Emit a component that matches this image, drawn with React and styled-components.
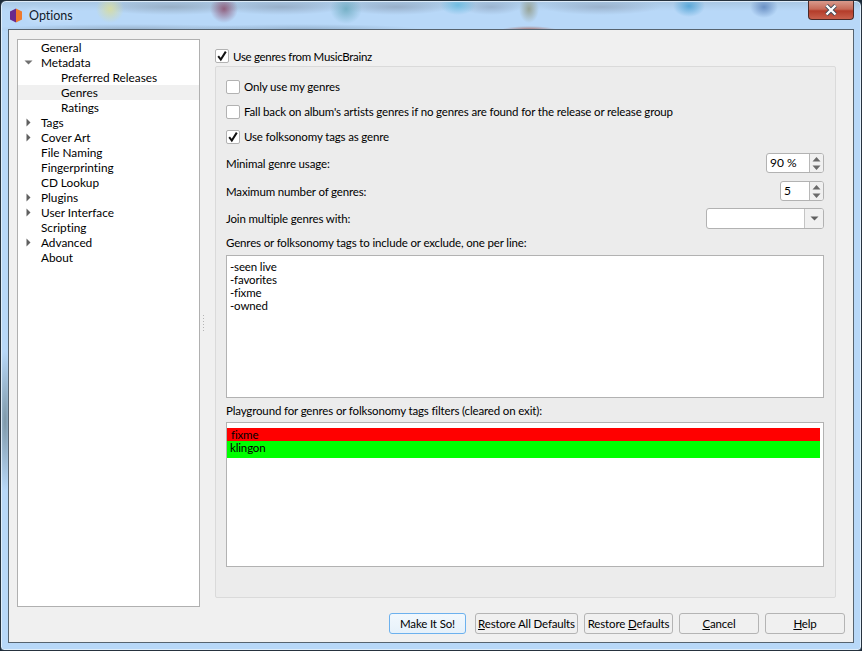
import React from 'react';
import styled, { createGlobalStyle } from 'styled-components';

const GlobalStyle = createGlobalStyle`
  html, body {
    margin: 0;
    padding: 0;
    background: #1c2a38;
  }
  * {
    box-sizing: border-box;
  }
`;

// Aero glass window frame with blurred desktop behind it
const Frame = styled.div`
  width: 862px;
  height: 651px;
  padding: 28px 7px 7px 7px;
  display: flex;
  flex-direction: column;
  position: relative;
  border: 1px solid #26323e;
  border-radius: 6px 6px 4px 4px;
  box-shadow: inset 0 0 0 1px #e4f0fae0;
  font-family: Lato, 'Liberation Sans', sans-serif;
  font-size: 11.5px;
  font-variant-ligatures: none;
  color: #000;
  background:
    radial-gradient(ellipse 14px 14px at 109px 8px, #d4dca8, #d4dca800),
    radial-gradient(ellipse 14px 14px at 223px 8px, #8a4a68d0, #8a4a6800),
    radial-gradient(ellipse 16px 15px at 345px 8px, #68a8bcd0, #68a8bc00),
    radial-gradient(ellipse 18px 10px at 457px 4px, #70bce0, #70bce000),
    radial-gradient(ellipse 10px 14px at 528px 8px, #98a498, #98a49800),
    radial-gradient(ellipse 16px 11px at 688px 5px, #5aa8d8, #5aa8d800),
    radial-gradient(ellipse 14px 11px at 763px 6px, #6a90c4, #6a90c400),
    radial-gradient(ellipse 75px 8px at 170px 6px, #8ca0b4b0, #8ca0b400),
    radial-gradient(ellipse 65px 8px at 280px 6px, #8ca0b8b0, #8ca0b800),
    radial-gradient(ellipse 55px 8px at 395px 6px, #8ca0b8b0, #8ca0b800),
    radial-gradient(ellipse 30px 8px at 490px 6px, #90a6c0b0, #90a6c000),
    radial-gradient(ellipse 60px 8px at 600px 6px, #90a4bcb0, #90a4bc00),
    radial-gradient(ellipse 28px 4px at 528px 29px, #a86a60, #a86a6000),
    radial-gradient(ellipse 120px 5px at 300px 28px, #8ca8c4c0, #8ca8c400),
    radial-gradient(ellipse 140px 5px at 130px 28px, #90a8c0c0, #90a8c000),
    radial-gradient(ellipse 9px 70px at 4px 420px, #7e98a8, #7e98a800),
    linear-gradient(180deg, #a8c6e2 0px, #b8d8f8 10px, #b8d8f8 100%);
`;

const TitleBar = styled.div`
  position: absolute;
  top: 0;
  left: 8px;
  right: 7px;
  height: 28px;
  display: flex;
  align-items: center;
  gap: 6px;
`;

const TitleText = styled.span`
  font-size: 12.5px;
  color: #10202c;
  text-shadow: 0 0 6px #ffffffcc;
`;

const CloseButton = styled.div`
  position: absolute;
  top: 0;
  right: 0;
  width: 46px;
  height: 19px;
  display: flex;
  align-items: center;
  justify-content: center;
  border: 1px solid #4a2a28;
  border-top: none;
  border-radius: 0 0 4px 4px;
  background: linear-gradient(180deg, #d89a8c 0%, #c66a58 45%, #b43c2a 55%, #c8604c 100%);
`;

const Client = styled.div`
  flex: 1;
  display: flex;
  flex-direction: column;
  min-height: 0;
  padding: 9px 8px 8px 8px;
  background: #f0f0f0;
  border: 1px solid #56636f;
`;

const Body = styled.div`
  display: flex;
  height: 568px;
`;

const Tree = styled.div`
  width: 183px;
  flex: none;
  font-size: 11.8px;
  background: #fff;
  border: 1px solid #b0b0b0;
`;

const TreeRow = styled.div`
  height: 15px;
  line-height: 15px;
  display: flex;
  align-items: center;
  padding-left: ${(p) => (p.$child ? 43 : 23)}px;
  position: relative;
  white-space: nowrap;
  background: ${(p) => (p.$selected ? '#f0f0f0' : 'transparent')};
`;

const TreeArrow = styled.svg`
  position: absolute;
  left: 6px;
  top: 3px;
  width: 9px;
  height: 9px;
`;

const Splitter = styled.div`
  width: 15px;
  flex: none;
  display: flex;
  align-items: center;
  padding-left: 3px;
`;

const Grip = styled.div`
  width: 1px;
  height: 16px;
  background: repeating-linear-gradient(180deg, #b4b4b4 0 1px, transparent 1px 3px);
`;

const Pane = styled.div`
  flex: 1;
  display: flex;
  flex-direction: column;
  padding: 10px 9px 9px 0;
  letter-spacing: -0.15px;
`;

const CheckRow = styled.label`
  display: flex;
  align-items: center;
  gap: 4px;
  height: 14px;
  margin-top: ${(p) => p.$top || 0}px;
  white-space: nowrap;
`;

const CheckText = styled.span`
  margin-bottom: ${(p) => (p.$lift ? 2 : 0)}px;
  letter-spacing: ${(p) => (p.$tight ? '-0.3px' : 'inherit')};
`;

const CheckBox = styled.span`
  width: 14px;
  height: 14px;
  flex: none;
  display: flex;
  align-items: center;
  justify-content: center;
  background: #fff;
  border: 1px solid #b2b2b2;
  border-radius: 2px;
`;

const GroupBox = styled.div`
  flex: 1;
  margin-top: 3px;
  display: flex;
  flex-direction: column;
  padding: 13px 11px 30px 10px;
  background: #ececec;
  border: 1px solid #dadada;
  border-radius: 2px;
`;

const FieldRow = styled.div`
  display: flex;
  align-items: center;
  justify-content: space-between;
  height: ${(p) => p.$h || 20}px;
  margin-top: ${(p) => p.$top || 0}px;
`;

const FieldLabel = styled.div`
  height: 14px;
  line-height: 14px;
  margin-top: ${(p) => p.$top || 0}px;
  white-space: nowrap;
`;

const Spin = styled.div`
  width: ${(p) => p.$w}px;
  height: 100%;
  display: flex;
  background: #fff;
  border: 1px solid #b2b2b2;
  border-radius: 3px;
  overflow: hidden;
`;

const SpinValue = styled.div`
  flex: 1;
  padding-left: 3px;
  font-size: 12px;
  letter-spacing: 0;
  line-height: 18px;
`;

const SpinButtons = styled.div`
  width: 14px;
  flex: none;
  display: flex;
  align-items: center;
  justify-content: center;
  background: #f0f0f0;
  border-left: 1px solid #b8b8b8;
`;

const Combo = styled.div`
  width: 118px;
  height: 100%;
  display: flex;
  justify-content: flex-end;
  background: #fff;
  border: 1px solid #b2b2b2;
  border-radius: 3px;
  overflow: hidden;
`;

const ComboButton = styled.div`
  width: 19px;
  flex: none;
  display: flex;
  align-items: center;
  justify-content: center;
  background: #f0f0f0;
  border-left: 1px solid #c4c4c4;
`;

const TextBox = styled.div`
  height: ${(p) => p.$h}px;
  margin-top: ${(p) => p.$top || 0}px;
  padding: ${(p) => p.$pad || '4px 3px'};
  background: #fff;
  border: 1px solid #b2b2b2;
`;

const TextLine = styled.div`
  height: 13px;
  line-height: 13px;
`;

const FilterLine = styled.div`
  height: ${(p) => p.$h}px;
  line-height: 13px;
  padding-left: ${(p) => p.$indent}px;
  background: ${(p) => p.$color};
`;

const Footer = styled.div`
  display: flex;
  justify-content: flex-end;
  margin-top: 6px;
  height: 21px;
`;

const DialogButton = styled.button`
  width: ${(p) => p.$w}px;
  margin-left: ${(p) => p.$left || 0}px;
  height: 21px;
  padding: 0;
  font: inherit;
  letter-spacing: -0.15px;
  color: #000;
  background: ${(p) => (p.$primary ? 'linear-gradient(180deg, #f2f8fd, #e6f1fa)' : '#f0f0f0')};
  border: 1px solid ${(p) => (p.$primary ? '#6cb1ee' : '#b4b4b4')};
  border-radius: 3px;
  white-space: nowrap;
`;

const Check = () => (
  <svg width="12" height="12" viewBox="0 0 12 12">
    <path d="M2.2 6.2 L4.8 9.6 L9.8 1.6" fill="none" stroke="#111" strokeWidth="2" />
  </svg>
);

const Spinner = () => (
  <svg width="9" height="15" viewBox="0 0 9 15">
    <path d="M4.5 1 L8.5 5.5 H0.5 Z M0.5 9.5 H8.5 L4.5 14 Z" fill="#6a6a6a" />
  </svg>
);

const Logo = () => (
  <svg width="14" height="15" viewBox="0 0 14 15">
    <path d="M7 0.5 L1 3.5 V11.5 L7 14.5 Z" fill="#6a2a8c" />
    <path d="M7 0.5 L13 3.5 V11.5 L7 14.5 Z" fill="#ee7a2c" />
  </svg>
);

const treeItems = [
  { label: 'General' },
  { label: 'Metadata', arrow: 'down' },
  { label: 'Preferred Releases', child: true },
  { label: 'Genres', child: true, selected: true },
  { label: 'Ratings', child: true },
  { label: 'Tags', arrow: 'right' },
  { label: 'Cover Art', arrow: 'right' },
  { label: 'File Naming' },
  { label: 'Fingerprinting' },
  { label: 'CD Lookup' },
  { label: 'Plugins', arrow: 'right' },
  { label: 'User Interface', arrow: 'right' },
  { label: 'Scripting' },
  { label: 'Advanced', arrow: 'right' },
  { label: 'About' },
];

const excludes = ['-seen live', '-favorites', '-fixme', '-owned'];

function App() {
  return (
    <Frame>
      <GlobalStyle />
      <TitleBar>
        <Logo />
        <TitleText>Options</TitleText>
        <CloseButton>
          <svg width="16" height="12" viewBox="0 0 16 12">
            <path d="M3.5 1.5 L12.5 10.5 M12.5 1.5 L3.5 10.5" stroke="#3c4a58" strokeWidth="4" />
            <path d="M3.5 1.5 L12.5 10.5 M12.5 1.5 L3.5 10.5" stroke="#fff" strokeWidth="2.4" />
          </svg>
        </CloseButton>
      </TitleBar>
      <Client>
        <Body>
          <Tree>
            {treeItems.map((item) => (
              <TreeRow key={item.label} $child={item.child} $selected={item.selected}>
                {item.arrow === 'down' && (
                  <TreeArrow viewBox="0 0 9 9">
                    <path d="M0.5 2.5 H8.5 L4.5 6.5 Z" fill="#707070" />
                  </TreeArrow>
                )}
                {item.arrow === 'right' && (
                  <TreeArrow viewBox="0 0 9 9">
                    <path d="M2.5 0.5 V8.5 L6.5 4.5 Z" fill="#606060" />
                  </TreeArrow>
                )}
                {item.label}
              </TreeRow>
            ))}
          </Tree>
          <Splitter>
            <Grip />
          </Splitter>
          <Pane>
            <CheckRow>
              <CheckBox>
                <Check />
              </CheckBox>
              <CheckText $tight>Use genres from MusicBrainz</CheckText>
            </CheckRow>
            <GroupBox>
              <CheckRow>
                <CheckBox />
                <CheckText $lift>Only use my genres</CheckText>
              </CheckRow>
              <CheckRow $top={11}>
                <CheckBox />
                <CheckText $lift>Fall back on album's artists genres if no genres are found for the release or release group</CheckText>
              </CheckRow>
              <CheckRow $top={11}>
                <CheckBox>
                  <Check />
                </CheckBox>
                <CheckText $lift>Use folksonomy tags as genre</CheckText>
              </CheckRow>
              <FieldRow $top={9} $h={20}>
                Minimal genre usage:
                <Spin $w={58}>
                  <SpinValue>90 %</SpinValue>
                  <SpinButtons>
                    <Spinner />
                  </SpinButtons>
                </Spin>
              </FieldRow>
              <FieldRow $top={8} $h={20}>
                Maximum number of genres:
                <Spin $w={44}>
                  <SpinValue>5</SpinValue>
                  <SpinButtons>
                    <Spinner />
                  </SpinButtons>
                </Spin>
              </FieldRow>
              <FieldRow $top={7} $h={21}>
                Join multiple genres with:
                <Combo>
                  <ComboButton>
                    <svg width="9" height="5" viewBox="0 0 9 5">
                      <path d="M0.5 0.5 H8.5 L4.5 4.5 Z" fill="#606060" />
                    </svg>
                  </ComboButton>
                </Combo>
              </FieldRow>
              <FieldLabel $top={7}>Genres or folksonomy tags to include or exclude, one per line:</FieldLabel>
              <TextBox $h={143} $top={5}>
                {excludes.map((line) => (
                  <TextLine key={line}>{line}</TextLine>
                ))}
              </TextBox>
              <FieldLabel $top={6}>Playground for genres or folksonomy tags filters (cleared on exit):</FieldLabel>
              <TextBox $h={145} $top={4} $pad="5px 3px 5px 0">
                <FilterLine $h={13} $indent={4} $color="#ff0000">fixme</FilterLine>
                <FilterLine $h={17} $indent={3} $color="#00ff00">klingon</FilterLine>
              </TextBox>
            </GroupBox>
          </Pane>
        </Body>
        <Footer>
          <DialogButton $w={77} $primary>Make It So!</DialogButton>
          <DialogButton $w={103} $left={9}><u>R</u>estore All Defaults</DialogButton>
          <DialogButton $w={89} $left={6}>Restore <u>D</u>efaults</DialogButton>
          <DialogButton $w={80} $left={6}><u>C</u>ancel</DialogButton>
          <DialogButton $w={80} $left={6}><u>H</u>elp</DialogButton>
        </Footer>
      </Client>
    </Frame>
  );
}

export default App;
